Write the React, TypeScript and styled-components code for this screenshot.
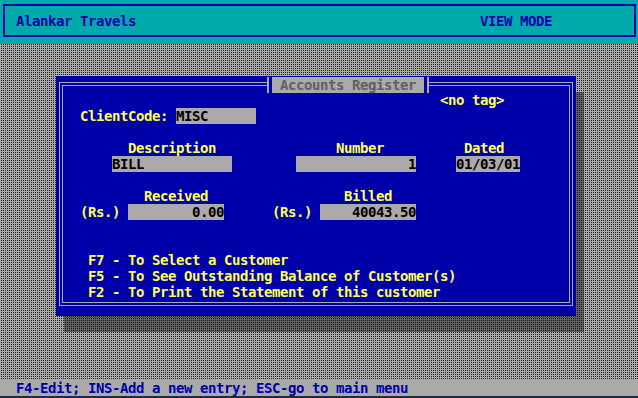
import React from "react";
import styled, { createGlobalStyle } from "styled-components";

const GlobalStyle = createGlobalStyle`
  html, body {
    margin: 0;
    padding: 0;
    width: 638px;
    height: 398px;
    overflow: hidden;
    background: #0000aa;
  }
`;

const dotted = (base: string, dot: string) => `
  background-color: ${base};
  background-image: conic-gradient(${dot} 0 25%, transparent 0 100%);
  background-size: 2px 2px;
`;

const Screen = styled.div`
  width: 638px;
  height: 398px;
  display: flex;
  flex-direction: column;
  font-family: "DejaVu Sans Mono", "Liberation Mono", monospace;
  font-weight: bold;
  font-size: 14px;
  letter-spacing: -0.43px;
  line-height: 16px;
`;

const Header = styled.header`
  height: 44px;
  box-sizing: border-box;
  background: #00aaaa;
  padding: 4px 2px 7px 3px;
  display: flex;
`;

const HeaderFrame = styled.div`
  flex: 1;
  border: 2px solid #0000aa;
  display: flex;
  align-items: center;
  justify-content: space-between;
  padding: 0 82px 0 11px;
  color: #0000aa;
`;

const Desk = styled.main`
  flex: 1;
  box-sizing: border-box;
  isolation: isolate;
  padding: 32px 0 0 56px;
  ${dotted("#acacac", "#1a1a1a")}
`;

const Dialog = styled.section`
  position: relative;
  width: 520px;
  height: 240px;
  background: #0000aa;
  display: grid;
  grid-template-columns: repeat(65, 8px);
  grid-template-rows: repeat(15, 16px);

  &::before {
    content: "";
    position: absolute;
    left: 3px;
    top: 6px;
    right: 3px;
    bottom: 10px;
    border: 1px solid #aaaaaa;
    box-shadow: inset 0 0 0 2px #0000aa, inset 0 0 0 3px #aaaaaa;
    pointer-events: none;
  }

  &::after {
    content: "";
    position: absolute;
    left: 8px;
    top: 16px;
    width: 100%;
    height: 100%;
    z-index: -1;
    ${dotted("#606060", "#1a1a1a")}
  }
`;

const Title = styled.div`
  position: absolute;
  left: 211px;
  top: 1px;
  height: 16px;
  display: flex;
  padding: 0 3px;
  border-left: 2px solid #aaaaaa;
  border-right: 2px solid #aaaaaa;
  background: #0000aa;
`;

const TitleText = styled.span`
  background: #aaaaaa;
  color: #606060;
  padding: 0 8px;
  white-space: pre;
`;

const Cell = styled.div<{ $col: number; $row: number; $span: number }>`
  grid-column: ${(p) => p.$col} / span ${(p) => p.$span};
  grid-row: ${(p) => p.$row};
  white-space: pre;
`;

const Label = styled(Cell)`
  color: #ffff55;
`;

const Field = styled(Cell)<{ $right?: boolean }>`
  background: #aaaaaa;
  color: #000000;
  text-align: ${(p) => (p.$right ? "right" : "left")};
`;

const StatusBar = styled.footer`
  height: 16px;
  background: #aaaaaa;
  color: #0000aa;
  padding-left: 16px;
  border-bottom: 2px solid #1e2b45;
`;

const help = [
  "F7 - To Select a Customer",
  "F5 - To See Outstanding Balance of Customer(s)",
  "F2 - To Print the Statement of this customer",
];

export default function App() {
  return (
    <>
      <GlobalStyle />
      <Screen>
        <Header>
          <HeaderFrame>
            <span>Alankar Travels</span>
            <span>VIEW MODE</span>
          </HeaderFrame>
        </Header>
        <Desk>
          <Dialog>
            <Title>
              <TitleText>Accounts Register</TitleText>
            </Title>
            <Label $col={49} $row={2} $span={8}>{"<no tag>"}</Label>

            <Label $col={4} $row={3} $span={11}>ClientCode:</Label>
            <Field $col={16} $row={3} $span={10}>MISC</Field>

            <Label $col={10} $row={5} $span={11}>Description</Label>
            <Label $col={36} $row={5} $span={6}>Number</Label>
            <Label $col={52} $row={5} $span={5}>Dated</Label>

            <Field $col={8} $row={6} $span={15}>BILL</Field>
            <Field $col={31} $row={6} $span={15} $right>1</Field>
            <Field $col={51} $row={6} $span={8}>01/03/01</Field>

            <Label $col={12} $row={8} $span={8}>Received</Label>
            <Label $col={37} $row={8} $span={6}>Billed</Label>

            <Label $col={4} $row={9} $span={5}>(Rs.)</Label>
            <Field $col={10} $row={9} $span={12} $right>0.00</Field>
            <Label $col={28} $row={9} $span={5}>(Rs.)</Label>
            <Field $col={34} $row={9} $span={12} $right>40043.50</Field>

            {help.map((line, i) => (
              <Label key={line} $col={5} $row={12 + i} $span={50}>
                {line}
              </Label>
            ))}
          </Dialog>
        </Desk>
        <StatusBar>F4-Edit; INS-Add a new entry; ESC-go to main menu</StatusBar>
      </Screen>
    </>
  );
}
